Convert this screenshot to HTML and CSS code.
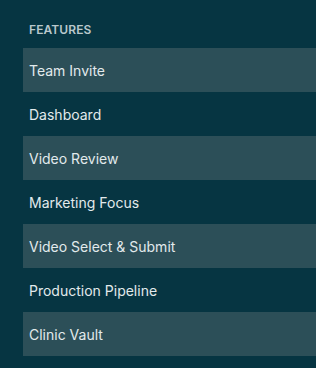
FILE: index.html
```html
<!DOCTYPE html>
<html lang="en">
<head>
    <meta charset="UTF-8">
    <meta name="viewport" content="width=device-width, initial-scale=1.0">
    <title>Features</title>
    <link rel="stylesheet" href="styles.css">
</head>
<body>
    <nav class="sidebar">
        <h3 class="nav-title">Features</h3>
        <ul class="nav-list">
            <li class="nav-item">Team Invite</li>
            <li class="nav-item">Dashboard</li>
            <li class="nav-item">Video Review</li>
            <li class="nav-item">Marketing Focus</li>
            <li class="nav-item">Video Select &amp; Submit</li>
            <li class="nav-item">Production Pipeline</li>
            <li class="nav-item">Clinic Vault</li>
        </ul>
    </nav>
</body>
</html>
```

FILE: styles.css
```css
body {
    margin: 0;
    padding: 0;
    min-height: 100vh;
    background: #063542;
    font-family: Inter, 'Noto Sans', sans-serif;
    color: #e2eaec;
}

.sidebar {
    padding: 21px 0 12px 23px;
}

.nav-title {
    margin: 0 0 9px 6px;
    font-size: 12px;
    line-height: 18px;
    font-weight: 600;
    letter-spacing: 0.1px;
    text-transform: uppercase;
    color: #b9c8cc;
}

.nav-list {
    list-style: none;
    margin: 0;
    padding: 0;
}

.nav-item {
    height: 44px;
    display: flex;
    align-items: center;
    padding-left: 6px;
    font-size: 14px;
    font-weight: 400;
}

.nav-item:nth-child(odd) {
    background: #2c4f58;
}
```
